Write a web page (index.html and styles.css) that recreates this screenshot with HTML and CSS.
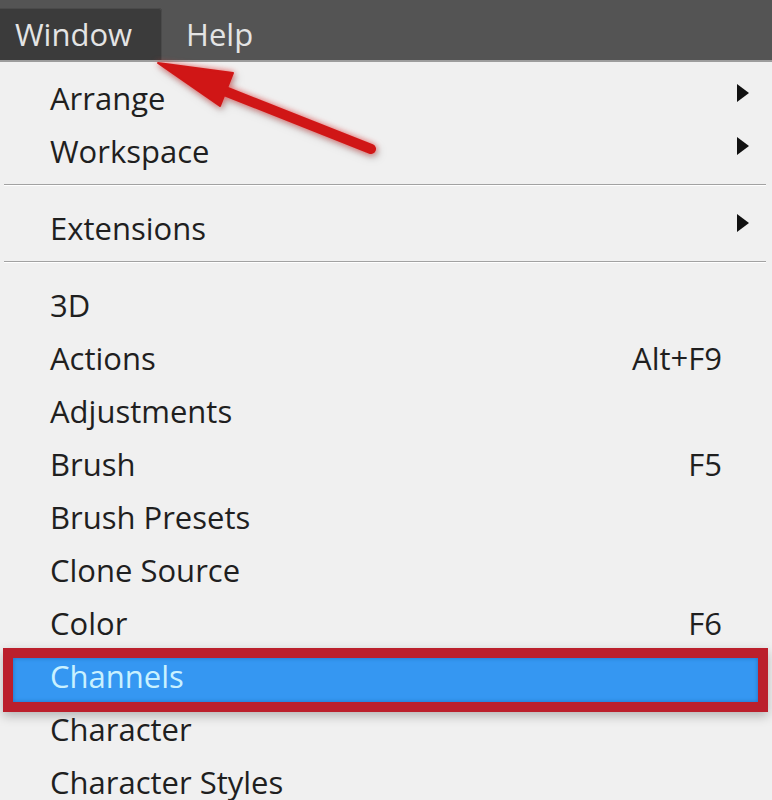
FILE: index.html
```html
<!DOCTYPE html>
<html>
<head>
<meta charset="utf-8">
<link rel="stylesheet" href="styles.css">
</head>
<body>
<div class="screen">
  <div class="menubar">
    <div class="bar-item active">Window</div>
    <div class="bar-item">Help</div>
  </div>
  <div class="menu">
    <div class="row"><span class="label">Arrange</span><span class="key"></span><span class="sub"><svg width="12" height="18" viewBox="0 0 12 18"><path d="M0 0 L12 9 L0 18 Z" fill="#111"/></svg></span></div>
    <div class="row"><span class="label">Workspace</span><span class="key"></span><span class="sub"><svg width="12" height="18" viewBox="0 0 12 18"><path d="M0 0 L12 9 L0 18 Z" fill="#111"/></svg></span></div>
    <div class="sep"></div>
    <div class="row"><span class="label">Extensions</span><span class="key"></span><span class="sub"><svg width="12" height="18" viewBox="0 0 12 18"><path d="M0 0 L12 9 L0 18 Z" fill="#111"/></svg></span></div>
    <div class="sep"></div>
    <div class="row"><span class="label">3D</span><span class="key"></span><span class="sub"></span></div>
    <div class="row"><span class="label">Actions</span><span class="key">Alt+F9</span><span class="sub"></span></div>
    <div class="row"><span class="label">Adjustments</span><span class="key"></span><span class="sub"></span></div>
    <div class="row"><span class="label">Brush</span><span class="key">F5</span><span class="sub"></span></div>
    <div class="row"><span class="label">Brush Presets</span><span class="key"></span><span class="sub"></span></div>
    <div class="row"><span class="label">Clone Source</span><span class="key"></span><span class="sub"></span></div>
    <div class="row"><span class="label">Color</span><span class="key">F6</span><span class="sub"></span></div>
    <div class="row selected"><span class="label">Channels</span><span class="key"></span><span class="sub"></span></div>
    <div class="row"><span class="label">Character</span><span class="key"></span><span class="sub"></span></div>
    <div class="row"><span class="label">Character Styles</span><span class="key"></span><span class="sub"></span></div>
  </div>
  <svg class="annot-arrow" width="772" height="200" viewBox="0 0 772 200">
    <line x1="212" y1="86" x2="371" y2="149" stroke="#d01616" stroke-width="10" stroke-linecap="round"/>
    <polygon points="158,63 233,73 220,106" fill="#d01616" stroke="#d01616" stroke-width="2" stroke-linejoin="round"/>
  </svg>
</div>
</body>
</html>
```
FILE: styles.css
```css
html, body {
  margin: 0;
  padding: 0;
  background: #f0f0f0;
}
.screen {
  position: relative;
  width: 772px;
  height: 800px;
  overflow: hidden;
  font-family: "Open Sans", "Noto Sans", sans-serif;
}
.menubar {
  display: flex;
  align-items: flex-end;
  height: 60px;
  background: #545454;
  border-bottom: 2px solid #9c9c9c;
}
.bar-item {
  height: 52px;
  line-height: 52px;
  font-size: 31px;
  color: #e4e4e4;
  padding: 0 26px 0 24px;
}
.bar-item.active {
  background: #3b3b3b;
  padding: 0 30px 0 15px;
  border-radius: 0 4px 0 0;
  box-shadow: inset 0 1px 0 #4a4a4a, inset -1px 0 0 #4a4a4a;
}
.menu {
  padding-top: 10px;
  background: #f0f0f0;
}
.row {
  position: relative;
  display: flex;
  height: 53px;
  line-height: 53px;
  font-size: 31px;
  color: #1f1f1f;
  padding: 0 23px 0 50px;
}
.label {
  flex: 1;
  position: relative;
  z-index: 2;
}
.key {
  margin-right: 15px;
}
.sub {
  width: 12px;
  display: flex;
  align-items: flex-start;
  padding-top: 12px;
  box-sizing: border-box;
}
.sub svg {
  display: block;
}
.sep {
  margin: 6px 6px 16px 4px;
  height: 1px;
  background: #a2a2a2;
  border-bottom: 1px solid #ffffff;
}
.row.selected .label {
  color: #c9f1ff;
}
.row.selected::before {
  content: "";
  position: absolute;
  left: 13px;
  right: 14px;
  top: 8px;
  height: 44px;
  background: #3597f2;
  box-shadow: inset 0 0 4px #1f6fc0, 0 0 0 10px #bb1f2c, 0 4px 10px 10px rgba(0, 0, 0, 0.25);
  z-index: 1;
}
.annot-arrow {
  position: absolute;
  left: 0;
  top: 0;
  filter: drop-shadow(0 0 3px rgba(255, 60, 60, 0.7)) drop-shadow(2px 3px 3px rgba(0, 0, 0, 0.25));
}
```
